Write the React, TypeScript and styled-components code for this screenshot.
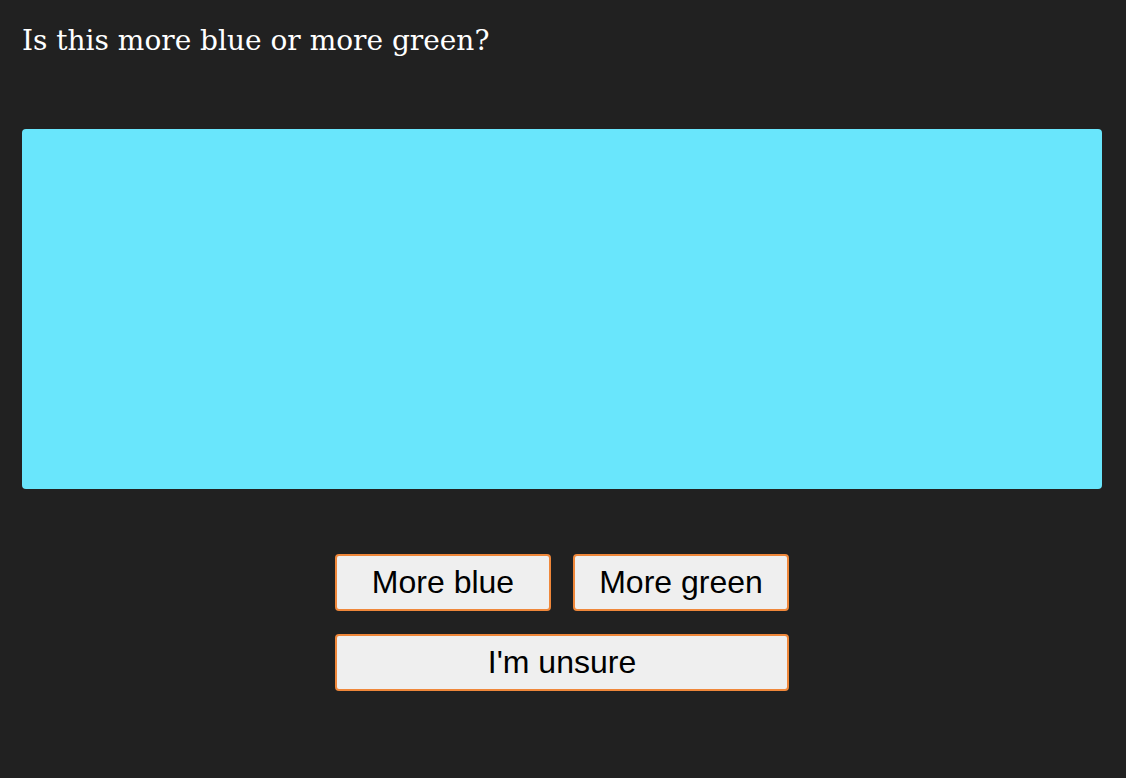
import React from "react";
import styled, { createGlobalStyle } from "styled-components";

const GlobalStyle = createGlobalStyle`
  html, body {
    margin: 0;
    padding: 0;
    background: #212121;
  }
`;

const Page = styled.div`
  padding: 22px 24px 22px 22px;
  min-height: 778px;
  box-sizing: border-box;
  background: #212121;
`;

const Question = styled.h1`
  margin: 0;
  font-family: "DejaVu Serif", "Liberation Serif", serif;
  font-weight: 400;
  font-size: 28px;
  line-height: 38px;
  color: #ffffff;
`;

const Swatch = styled.div<{ $color: string }>`
  margin-top: 69px;
  height: 360px;
  border-radius: 4px;
  background: ${(props) => props.$color};
`;

const Choices = styled.div`
  margin-top: 65px;
  display: grid;
  grid-template-columns: 216px 216px;
  column-gap: 22px;
  row-gap: 23px;
  justify-content: center;
`;

const ChoiceButton = styled.button<{ $wide?: boolean }>`
  grid-column: ${(props) => (props.$wide ? "1 / span 2" : "auto")};
  height: 57px;
  padding: 0;
  border: 2px solid #ef873a;
  border-radius: 4px;
  background: #efefef;
  color: #000;
  font-family: "Liberation Sans", Arial, sans-serif;
  font-size: 32px;
  cursor: pointer;
`;

const App = () => {
  return (
    <Page>
      <GlobalStyle />
      <Question>Is this more blue or more green?</Question>
      <Swatch $color="#69e6fc" />
      <Choices>
        <ChoiceButton>More blue</ChoiceButton>
        <ChoiceButton>More green</ChoiceButton>
        <ChoiceButton $wide>I'm unsure</ChoiceButton>
      </Choices>
    </Page>
  );
};

export default App;
